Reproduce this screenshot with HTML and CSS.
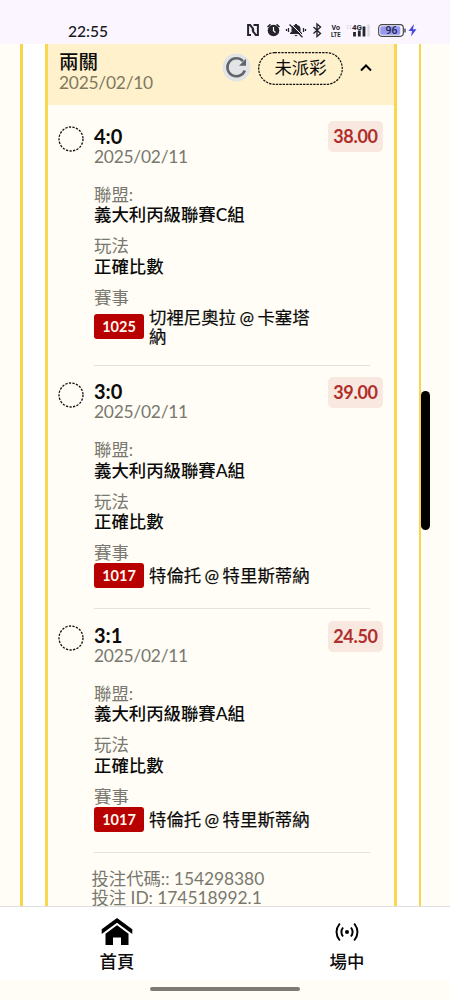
FILE: index.html
```html
<!DOCTYPE html>
<html lang="zh-Hant">
<head>
<meta charset="utf-8">
<meta name="viewport" content="width=device-width">
<title>投注紀錄</title>
<link rel="stylesheet" href="styles.css">
</head>
<body>
<div class="screen">
  <header class="status">
    <span class="clock">22:55</span>
    <svg class="status-icons" width="176" height="18" viewBox="0 0 176 18">
      <path d="M6 13.900H3.100V4.100H5.200L8.200 8V11.500M8.500 4.100H12.900V13.900H10.800L7.800 10V6.500" fill="none" stroke="#25252b" stroke-width="2"/>
      <circle cx="28.500" cy="9.500" r="5.800" fill="#25252b"/>
      <path d="M22.500 6L25.500 3.400M34.500 6L31.500 3.400" stroke="#25252b" stroke-width="1.500"/>
      <path d="M28.500 6V9.800L30.500 11.500" fill="none" stroke="#fff" stroke-width="1.200"/>
      <path d="M45 13V12L46.500 10.800V8Q46.500 4.500 50 4V3H52V4Q55.500 4.500 55.500 8V10.800L57 12V13ZM49.300 14H52.700L51 15.500Z" fill="#25252b"/>
      <path d="M46 3L58.500 15.500" stroke="#fbf5ff" stroke-width="1"/>
      <path d="M44.500 3.500L57.500 16.300M43.500 7V11M41.500 8V10M58.500 7V11M60.500 8V10" stroke="#25252b" stroke-width="1.300"/>
      <path d="M68.500 6L75.500 12.500L72 15.500V3L75.500 6L68.500 12.500" fill="none" stroke="#25252b" stroke-width="1.400"/>
      <text class="tiny" x="86.500" y="8.500" textLength="8.500" lengthAdjust="spacingAndGlyphs">Vo</text>
      <text class="tiny" x="86" y="15.500" textLength="9.500" lengthAdjust="spacingAndGlyphs">LTE</text>
      <path d="M102.500 4V5.500M105.500 4V5.500M102.500 6.500V8M105.500 6.500V8" stroke="#d8d4dd" stroke-width="1.500"/>
      <text class="tiny" x="107" y="8.700" textLength="10" lengthAdjust="spacingAndGlyphs">4G</text>
      <path d="M109.500 11V15.500M114.300 9.500V15.500M119 5.500V15.500" stroke="#25252b" stroke-width="2.800"/>
      <path d="M123.500 3.500V15.500" stroke="#ddd8e0" stroke-width="2.500"/>
      <rect x="133.700" y="3.700" width="24.600" height="11.600" rx="3.200" fill="#fff" stroke="#45454e" stroke-width="1.200"/>
      <rect x="135.300" y="5.300" width="20" height="8.400" rx="1.500" fill="#9698f2"/>
      <path d="M160 7.500V11.500" stroke="#45454e" stroke-width="1.400"/>
      <text class="level" x="140.500" y="13">96</text>
      <path d="M169 3L163.500 10H167L166 15.500L171.500 8.300H168Z" fill="#484bd8"/>
    </svg>
  </header>

  <main class="page">
    <div class="panel">
      <div class="card">
        <div class="card-head">
          <div class="head-text">
            <div class="strong">兩關</div>
            <div class="date">2025/02/10</div>
          </div>
          <svg class="refresh" width="29" height="29" viewBox="0 0 29 29">
            <circle cx="14.500" cy="14.500" r="14" fill="#e3e4e6"/>
            <path d="M22.800 17.500A9 9 0 1 1 21 8.200" fill="none" stroke="#60656c" stroke-width="2.500"/>
            <path d="M24 5.800V12.800H17Z" fill="#60656c"/>
          </svg>
          <div class="pill"><svg width="85" height="33" viewBox="0 0 85 33"><rect x=".7" y=".7" width="83.600" height="31.600" rx="15.800" fill="none" stroke="#111" stroke-width="1.200" stroke-dasharray="2.400 1"/></svg><span>未派彩</span></div>
          <svg class="caret" width="14" height="10" viewBox="0 0 14 10"><path d="M2 7.500L7 2.500L12 7.500" fill="none" stroke="#000" stroke-width="2"/></svg>
        </div>

        <section class="bet tall">
          <svg class="ring" width="26" height="26" viewBox="0 0 26 26"><circle cx="13" cy="13" r="12"/></svg>
          <div class="details">
            <div class="score">4:0</div><div class="date">2025/02/11</div>
            <div class="field first"><div class="label">聯盟:</div><div class="strong">義大利丙級聯賽C組</div></div>
            <div class="field"><div class="label">玩法</div><div class="strong">正確比數</div></div>
            <div class="label event">賽事</div>
            <div class="match"><span class="code">1025</span><span class="teams">切裡尼奧拉 @ 卡塞塔納</span></div>
          </div>
          <div class="odds">38.00</div>
        </section>

        <section class="bet">
          <svg class="ring" width="26" height="26" viewBox="0 0 26 26"><circle cx="13" cy="13" r="12"/></svg>
          <div class="details">
            <div class="score">3:0</div><div class="date">2025/02/11</div>
            <div class="field first"><div class="label">聯盟:</div><div class="strong">義大利丙級聯賽A組</div></div>
            <div class="field"><div class="label">玩法</div><div class="strong">正確比數</div></div>
            <div class="label event">賽事</div>
            <div class="match"><span class="code">1017</span><span class="teams">特倫托 @ 特里斯蒂納</span></div>
          </div>
          <div class="odds">39.00</div>
        </section>

        <section class="bet">
          <svg class="ring" width="26" height="26" viewBox="0 0 26 26"><circle cx="13" cy="13" r="12"/></svg>
          <div class="details">
            <div class="score">3:1</div><div class="date">2025/02/11</div>
            <div class="field first"><div class="label">聯盟:</div><div class="strong">義大利丙級聯賽A組</div></div>
            <div class="field"><div class="label">玩法</div><div class="strong">正確比數</div></div>
            <div class="label event">賽事</div>
            <div class="match"><span class="code">1017</span><span class="teams">特倫托 @ 特里斯蒂納</span></div>
          </div>
          <div class="odds">24.50</div>
        </section>

        <div class="ids"><div>投注代碼:: 154298380</div><div>投注 ID: 174518992.1</div></div>
      </div>
    </div>
    <div class="scroll-thumb"></div>
  </main>

  <nav class="tabs">
    <div class="tab">
      <svg width="32" height="30" viewBox="0 0 32 30"><path d="M16 1L31.300 12.300V17L16 5.800L.7 17V12.300ZM16 8.300L27.500 16.700V28H20V20.500H12V28H4.500V16.700Z"/></svg>
      <span>首頁</span>
    </div>
    <div class="tab">
      <svg width="32" height="30" viewBox="0 0 32 30"><circle cx="16" cy="15" r="2"/><path d="M12 10.500Q8.800 15 12 19.500M20 10.500Q23.200 15 20 19.500M8.800 6.500Q2.200 15 8.800 23.500M23.200 6.500Q29.800 15 23.200 23.500" fill="none" stroke="#000" stroke-width="1.900"/></svg>
      <span>場中</span>
    </div>
  </nav>
  <footer class="gesture"><div class="handle"></div></footer>
</div>
</body>
</html>
```
FILE: styles.css
```css
* { box-sizing: border-box; }
body {
  margin: 0;
  font-family: Lato, "Noto Sans CJK TC", sans-serif;
  font-size: 17.4px;
  line-height: 20.5px;
  color: #0b0b0b;
}
.screen { width: 450px; height: 1000px; display: flex; flex-direction: column; overflow: hidden; background: #fffdf5; }
.status { height: 44px; flex: none; background: #fbf5ff; display: flex; justify-content: space-between; padding: 21px 29px 0 68px; }
.clock { font-size: 15.600px; line-height: 20px; font-weight: 500; color: #17171c; }
.status-icons { display: block; }
.tiny { font: 700 7px Roboto, sans-serif; fill: #25252b; }
.level { font: 500 10.5px Roboto, sans-serif; fill: #26264a; }

.page { position: relative; height: 862px; flex: none; overflow: hidden; padding: 0 29px 0 20px; }
.panel { height: 862px; background: #fff; border: solid #f7d64d; border-width: 0 2px 0 3px; padding: 0 22px; }
.card { height: 862px; background: #fffdf5; border: solid #f9d74f; border-width: 0 3px; overflow: hidden; }
.card-head { height: 61px; background: #fff1cb; display: flex; align-items: flex-start; padding-left: 11px; margin-bottom: 4.500px; }
.head-text { width: 163px; padding-top: 8px; }
.head-text .strong { font-size: 19.5px; }
.date, .label { color: #787870; }
.date { letter-spacing: -0.250px; }
.card-head .date { color: #807961; }
.strong { font-weight: 500; white-space: nowrap; }
.refresh { margin-top: 9px; flex: none; }
.pill { position: relative; width: 85px; height: 33px; margin: 8px 0 0 7px; display: flex; align-items: center; justify-content: center; flex: none; }
.pill svg { position: absolute; inset: 0; }
.caret { margin: 19px 0 0 16px; flex: none; }

.bet { height: 243.500px; display: flex; align-items: flex-start; padding-left: 10px; }
.bet.tall { height: 256px; }
.ring { margin-top: 16px; fill: none; stroke: #111; stroke-width: 1.300; stroke-dasharray: 2.300 1.300; flex: none; }
.details { width: 276px; height: 100%; margin-left: 10px; padding-top: 15.500px; border-bottom: 1px solid #e2e1da; flex: none; }
.tall .details { padding-top: 16px; }
.score { font-size: 20px; font-weight: 700; line-height: 21px; }
.field.first { margin-top: 17.500px; }
.field { margin-bottom: 10.500px; }
.label.event { line-height: 20px; }
.match { display: flex; align-items: center; }
.code { width: 50px; height: 25px; border-radius: 3px; background: #b90000; color: #fff7ec; font-size: 14.500px; font-weight: 700; line-height: 25px; text-align: center; }
.teams { width: 168px; margin-left: 5px; line-height: 19px; word-spacing: -1px; -webkit-text-stroke: 0.2px #0b0b0b; }
.odds { width: 55px; height: 31px; margin: 11.500px 0 0 -42px; flex: none; border-radius: 5px; background: #f8e8e0; color: #b02e2b; font-size: 18px; letter-spacing: -0.3px; font-weight: 700; line-height: 31px; text-align: center; }
.ids { padding: 16.500px 0 0 43.500px; line-height: 19px; color: #787870; letter-spacing: -0.05px; }
.scroll-thumb { position: absolute; left: 421px; top: 347px; width: 9px; height: 139px; border-radius: 4.500px; background: #000; }

.tabs { height: 74px; flex: none; background: #fff; border-top: 1px solid #dedede; display: flex; }
.tab { width: 230px; flex: none; display: flex; flex-direction: column; align-items: center; padding: 10px 0 0 4px; }
.tab svg { display: block; flex: none; }
.tab span { margin-top: 5px; font-weight: 500; }
.gesture { height: 20px; display: flex; justify-content: center; padding-top: 7px; }
.handle { width: 150px; height: 4px; border-radius: 2px; background: #7d7c74; }
```
